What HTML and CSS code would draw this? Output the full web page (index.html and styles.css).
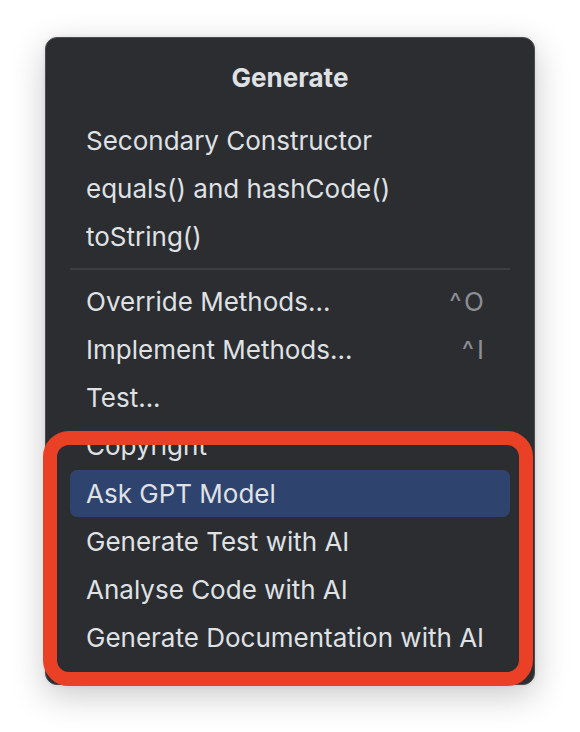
FILE: index.html
```html
<!DOCTYPE html>
<html>
<head>
<meta charset="utf-8">
<link rel="stylesheet" href="styles.css">
</head>
<body>
<div class="popup">
  <div class="title">Generate</div>
  <ul class="list">
    <li class="item"><span>Secondary Constructor</span></li>
    <li class="item"><span>equals() and hashCode()</span></li>
    <li class="item"><span>toString()</span></li>
    <li class="sep"></li>
    <li class="item"><span>Override Methods...</span><span class="key">^O</span></li>
    <li class="item"><span>Implement Methods...</span><span class="key">^I</span></li>
    <li class="item"><span>Test...</span></li>
    <li class="item"><span>Copyright</span></li>
    <li class="item selected"><span>Ask GPT Model</span></li>
    <li class="item"><span>Generate Test with AI</span></li>
    <li class="item"><span>Analyse Code with AI</span></li>
    <li class="item"><span>Generate Documentation with AI</span></li>
  </ul>
</div>
<div class="mark"></div>
</body>
</html>
```
FILE: styles.css
```css
html, body {
  margin: 0;
  padding: 0;
  background: #ffffff;
}
body {
  width: 580px;
  height: 732px;
  position: relative;
  overflow: hidden;
  font-family: Inter, "Noto Sans", sans-serif;
}
.popup {
  margin: 37px 0 0 45px;
  width: 490px;
  height: 648px;
  box-sizing: border-box;
  background: #2b2d30;
  border: 1px solid #4a4c51;
  border-radius: 12px;
  box-shadow: 0 10px 34px rgba(0, 0, 0, 0.22), 0 0 4px rgba(0, 0, 0, 0.08);
  padding: 16px 24px 0 24px;
}
.title {
  height: 48px;
  line-height: 48px;
  text-align: center;
  color: #dfe1e5;
  font-size: 26px;
  font-weight: 700;
}
.list {
  list-style: none;
  margin: 14px 0 0 0;
  padding: 0;
}
.item {
  height: 48px;
  display: flex;
  align-items: center;
  justify-content: space-between;
  padding: 0 26px 0 16px;
  color: #dfe1e5;
  font-size: 26px;
  white-space: nowrap;
  border-radius: 7px;
  box-sizing: border-box;
}
.item.selected {
  background: #2e436e;
  margin-top: 1px;
  height: 47px;
}
.key {
  color: #8b8e94;
  letter-spacing: 3px;
  margin-right: -3px;
}
.sep {
  height: 17px;
  display: flex;
  align-items: center;
}
.sep::before {
  content: "";
  display: block;
  width: 100%;
  height: 2px;
  background: #3c3e42;
}
.mark {
  position: absolute;
  left: 43px;
  top: 431px;
  width: 490px;
  height: 255px;
  box-sizing: border-box;
  border: 14px solid #ea4026;
  border-radius: 26px;
}
```
